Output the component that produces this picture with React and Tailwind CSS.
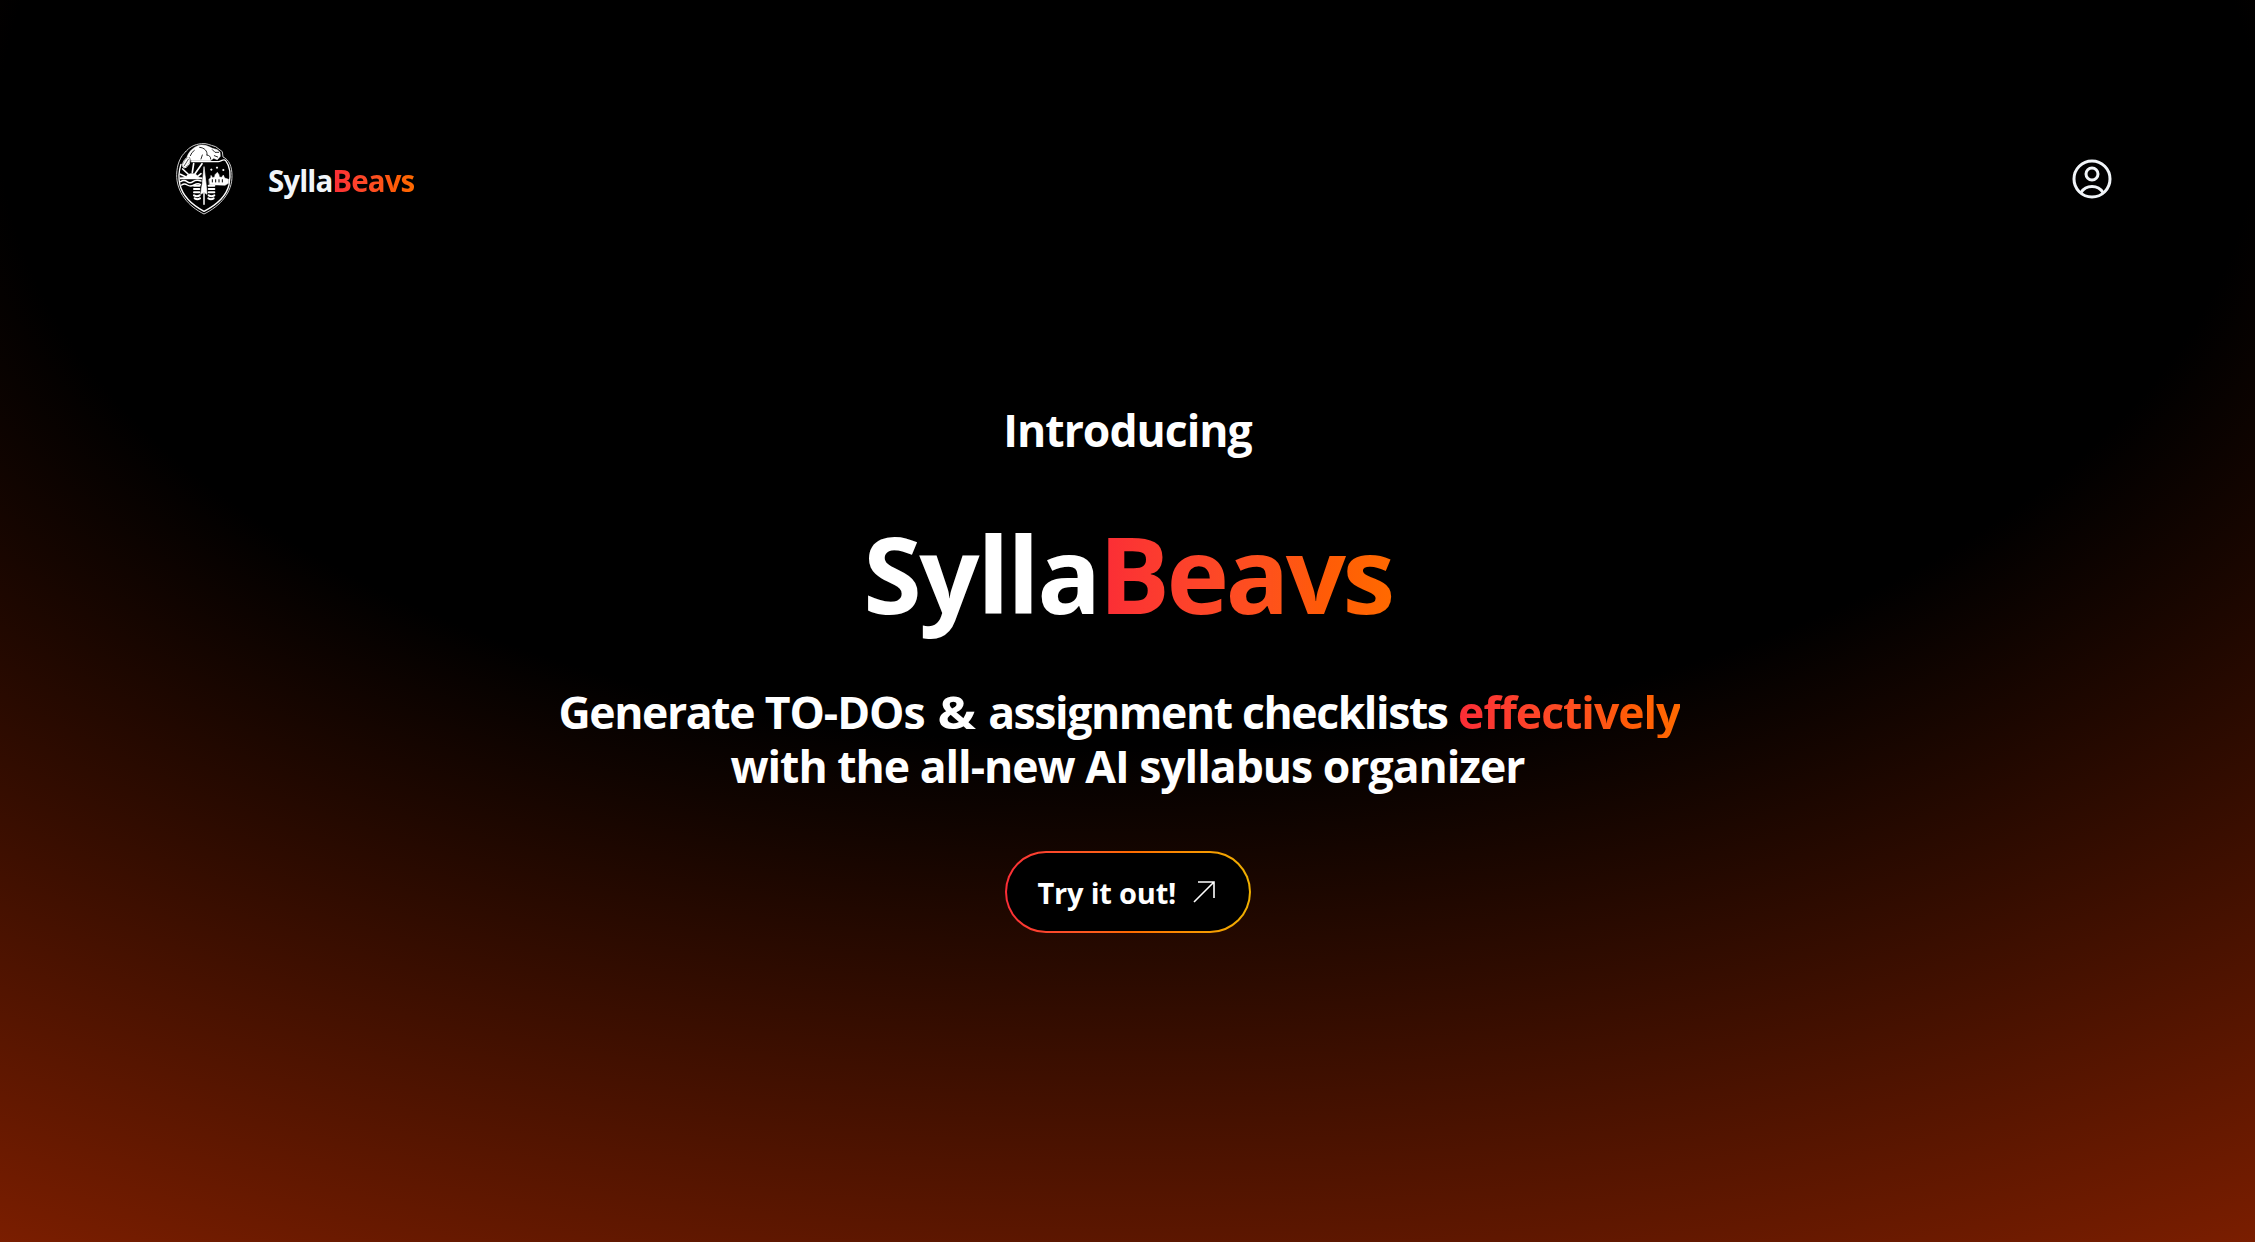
const GRADIENT = "bg-linear-to-r from-[#fb2c36] via-[#ff5a08] via-75% to-[#ff6900] bg-clip-text text-transparent";

function Crest() {
  return (
    <svg viewBox="0 0 240 255" className="h-[85px] w-[80px]" fill="none" stroke="#fff" strokeLinecap="round" strokeLinejoin="round">
      <path d="M62 50 C46 64 36 88 35 118 C34 172 70 214 117 237 C166 213 202 172 201 122 C201 94 192 74 174 66 L172 50 L152 35 C134 30 124 24 110 26 C86 28 72 38 62 50Z" strokeWidth="3" stroke="#ccc" />
      <path d="M48 88 C42 106 40 130 45 150 C54 186 82 210 117 229 C154 210 184 182 192 150 C198 120 194 92 182 77 C176 70 168 80 160 80 L80 80" strokeWidth="4" />
      <path d="M66 66 C72 48 88 33 108 30 C124 29 134 36 142 40 L157 44 L165 52 L166 64 L157 74 L146 70 L136 77 L80 77 L70 68Z" fill="#fff" strokeWidth="1.5" />
      <path d="M104 37 C118 38 128 48 126 60 M126 60 Q138 62 137 72 M142 44 L150 52 L161 52 M148 62 L158 66 M76 62 Q79 52 88 46 M112 60 L108 72" stroke="#000" strokeWidth="2.5" />
      <ellipse cx="64" cy="83" rx="9" ry="17" transform="rotate(28 64 83)" fill="#fff" stroke="#000" strokeWidth="3" />
      <ellipse cx="64" cy="83" rx="9" ry="17" transform="rotate(28 64 83)" strokeWidth="2.5" />
      <path d="M58 92 L70 73" stroke="#000" strokeWidth="2" />
      <path d="M111 86 L90 116 M86 86 L82 112 M53 102 L69 117 M46 118 L62 125 M108 116 L98 124" strokeWidth="5" />
      <path d="M63 126 C67 112 95 112 99 126 L111 128 L111 132 L45 132 L45 128Z" fill="#fff" strokeWidth="1.5" />
      <path d="M47 140 Q57 133 66 140 T84 140 T108 138 M50 150 Q58 144 67 150 T87 150 T106 148" strokeWidth="4.5" />
      <path d="M132 133 L137 128 L138 121 L143 128 L149 126 L150 119 L157 112 L162 119 L163 126 L170 127 L175 120 L179 129 L191 133 L190 145 L180 151 L134 149Z" fill="#fff" strokeWidth="1.5" />
      <path d="M142 134V141 M152 134V141 M162 134V141 M172 134V141" stroke="#000" strokeWidth="3" />
      <path d="M139 102v4 M137 104h4 M156 96v4 M154 98h4 M175 103v4 M173 105h4" strokeWidth="3" />
      <path d="M117 96 L112 145 L107 178 L117 172 L126 178 L123 145Z" fill="#fff" strokeWidth="2" />
      <path d="M117 174V208" strokeWidth="4.5" />
      <path d="M87 152H104 M87 162H103 M87 172H103 M87 181Q96 186 104 181 M89 190Q97 195 105 190 M131 152H148 M131 162H148 M131 172H148 M131 181Q139 186 148 181 M130 190Q138 195 146 190" strokeWidth="6" />
    </svg>
  );
}

export default function App() {
  return (
    <div className="flex h-[1242px] w-full flex-col bg-[radial-gradient(125%_125%_at_50%_10%,#000_40%,#ad2a00_100%)] font-['Open_Sans',sans-serif] font-bold text-white">
      <header className="flex items-center justify-between px-[165px] pt-[135px]">
        <div className="flex items-center">
          <Crest />
          <span className="ml-[23px] mt-[6px] text-[29.5px] leading-[42px] tracking-[-0.9px] text-slate-100">
            Sylla<span className={GRADIENT}>Beavs</span>
          </span>
        </div>
        <svg viewBox="0 0 40 40" className="mr-[-22px] mt-[3px] size-10" fill="none" stroke="#f1f5f9" strokeWidth="3">
          <circle cx="20" cy="20" r="18" />
          <circle cx="20" cy="15" r="6" />
          <path d="M9 33.5C14 25.5 26 25.5 31 33.5" />
        </svg>
      </header>
      <main className="flex flex-col items-center">
        <p className="mt-[183px] text-[44.5px] leading-[54px] tracking-[-1px]">Introducing</p>
        <h1 className="mt-[62px] text-[106px] leading-[108px] tracking-[-3px]">
          <span className="tracking-[-2.4px]">Sylla</span>
          <span className={`${GRADIENT} tracking-[-3.6px]`}>Beavs</span>
        </h1>
        <p className="mt-[58px] text-center text-[44.5px] leading-[54px] tracking-[-1px]">
          <span className="tracking-[-1.4px]">Generate</span> TO-DOs{" "}
          <span className="inline-block scale-x-115 px-[5px]">&amp;</span>{" "}
          <span className="tracking-[-1.4px]">assignment checklists</span>{" "}
          <span className={`${GRADIENT} mr-[16px] inline-block [clip-path:inset(0_0_1px_0)]`}>effectively</span>
          <br />
          with the all-new AI syllabus organizer
        </p>
        <button className="mt-[58px] rounded-full bg-linear-to-r from-[#fb2c36] via-[#ff6900] to-[#f0b100] p-[2px]">
          <span className="flex h-[78px] w-[242px] items-center rounded-full bg-black pl-[31px] text-[29px] tracking-[-0.2px]">
            <span className="mt-[2px]">Try it out!</span>
            <svg viewBox="0 0 22 22" className="ml-[17px] size-[22px]" fill="none" stroke="#fff" strokeWidth="1.6">
              <path d="M1 21L21 1M5 1H21V17" />
            </svg>
          </span>
        </button>
      </main>
    </div>
  );
}
